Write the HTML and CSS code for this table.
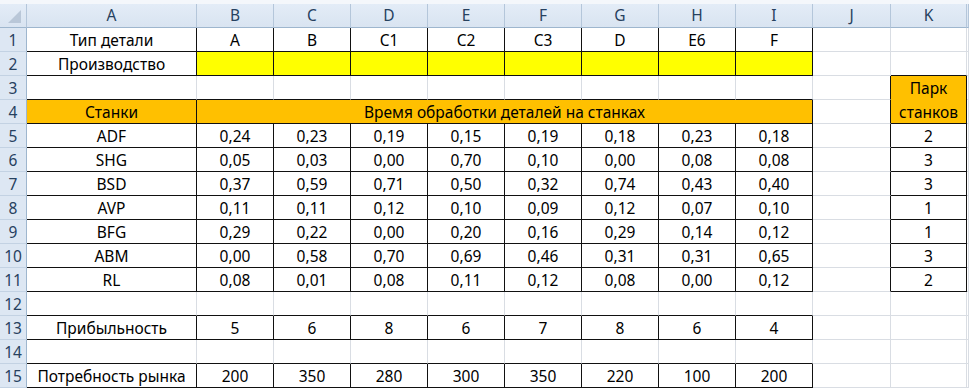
FILE: index.html
```html
<!DOCTYPE html>
<html lang="ru">
<head>
<meta charset="utf-8">
<title>Станки</title>
<link rel="stylesheet" href="styles.css">
</head>
<body>
<div class="sheet">
  <div class="strip"></div>

  <div class="ch corner"><svg class="tri" width="14" height="14" viewBox="0 0 14 14"><polygon points="13,0 13,13 0,13" fill="#b9c7d8"/></svg></div>
  <div class="ch">A</div><div class="ch">B</div><div class="ch">C</div><div class="ch">D</div><div class="ch">E</div><div class="ch">F</div><div class="ch">G</div><div class="ch">H</div><div class="ch">I</div><div class="ch">J</div><div class="ch">K</div><div class="ch"></div>

  <div class="rh">1</div>
  <div class="c b">Тип детали</div><div class="c b">A</div><div class="c b">B</div><div class="c b">C1</div><div class="c b">C2</div><div class="c b">C3</div><div class="c b">D</div><div class="c b">E6</div><div class="c b">F</div><div class="c"></div><div class="c"></div><div class="c"></div>

  <div class="rh">2</div>
  <div class="c b">Производство</div><div class="c b y"></div><div class="c b y"></div><div class="c b y"></div><div class="c b y"></div><div class="c b y"></div><div class="c b y"></div><div class="c b y"></div><div class="c b y"></div><div class="c"></div><div class="c bb"></div><div class="c"></div>

  <div class="rh">3</div>
  <div class="c bb"></div><div class="c bb"></div><div class="c bb"></div><div class="c bb"></div><div class="c bb"></div><div class="c bb"></div><div class="c bb"></div><div class="c bb"></div><div class="c bb"></div><div class="c br"></div><div class="c b o tall">Парк<br>станков</div><div class="c"></div>

  <div class="rh">4</div>
  <div class="c b o">Станки</div><div class="c b o wide">Время обработки деталей на станках</div><div class="c br"></div><div class="c"></div>

  <div class="rh">5</div>
  <div class="c b">ADF</div><div class="c b">0,24</div><div class="c b">0,23</div><div class="c b">0,19</div><div class="c b">0,15</div><div class="c b">0,19</div><div class="c b">0,18</div><div class="c b">0,23</div><div class="c b">0,18</div><div class="c br"></div><div class="c b">2</div><div class="c"></div>

  <div class="rh">6</div>
  <div class="c b">SHG</div><div class="c b">0,05</div><div class="c b">0,03</div><div class="c b">0,00</div><div class="c b">0,70</div><div class="c b">0,10</div><div class="c b">0,00</div><div class="c b">0,08</div><div class="c b">0,08</div><div class="c br"></div><div class="c b">3</div><div class="c"></div>

  <div class="rh">7</div>
  <div class="c b">BSD</div><div class="c b">0,37</div><div class="c b">0,59</div><div class="c b">0,71</div><div class="c b">0,50</div><div class="c b">0,32</div><div class="c b">0,74</div><div class="c b">0,43</div><div class="c b">0,40</div><div class="c br"></div><div class="c b">3</div><div class="c"></div>

  <div class="rh">8</div>
  <div class="c b">AVP</div><div class="c b">0,11</div><div class="c b">0,11</div><div class="c b">0,12</div><div class="c b">0,10</div><div class="c b">0,09</div><div class="c b">0,12</div><div class="c b">0,07</div><div class="c b">0,10</div><div class="c br"></div><div class="c b">1</div><div class="c"></div>

  <div class="rh">9</div>
  <div class="c b">BFG</div><div class="c b">0,29</div><div class="c b">0,22</div><div class="c b">0,00</div><div class="c b">0,20</div><div class="c b">0,16</div><div class="c b">0,29</div><div class="c b">0,14</div><div class="c b">0,12</div><div class="c br"></div><div class="c b">1</div><div class="c"></div>

  <div class="rh">10</div>
  <div class="c b">ABM</div><div class="c b">0,00</div><div class="c b">0,58</div><div class="c b">0,70</div><div class="c b">0,69</div><div class="c b">0,46</div><div class="c b">0,31</div><div class="c b">0,31</div><div class="c b">0,65</div><div class="c br"></div><div class="c b">3</div><div class="c"></div>

  <div class="rh">11</div>
  <div class="c b">RL</div><div class="c b">0,08</div><div class="c b">0,01</div><div class="c b">0,08</div><div class="c b">0,11</div><div class="c b">0,12</div><div class="c b">0,08</div><div class="c b">0,00</div><div class="c b">0,12</div><div class="c br"></div><div class="c b">2</div><div class="c"></div>

  <div class="rh">12</div>
  <div class="c bb"></div><div class="c bb"></div><div class="c bb"></div><div class="c bb"></div><div class="c bb"></div><div class="c bb"></div><div class="c bb"></div><div class="c bb"></div><div class="c bb"></div><div class="c"></div><div class="c"></div><div class="c"></div>

  <div class="rh">13</div>
  <div class="c b">Прибыльность</div><div class="c b">5</div><div class="c b">6</div><div class="c b">8</div><div class="c b">6</div><div class="c b">7</div><div class="c b">8</div><div class="c b">6</div><div class="c b">4</div><div class="c"></div><div class="c"></div><div class="c"></div>

  <div class="rh">14</div>
  <div class="c bb"></div><div class="c bb"></div><div class="c bb"></div><div class="c bb"></div><div class="c bb"></div><div class="c bb"></div><div class="c bb"></div><div class="c bb"></div><div class="c bb"></div><div class="c"></div><div class="c"></div><div class="c"></div>

  <div class="rh">15</div>
  <div class="c b">Потребность рынка</div><div class="c b">200</div><div class="c b">350</div><div class="c b">280</div><div class="c b">300</div><div class="c b">350</div><div class="c b">220</div><div class="c b">100</div><div class="c b">200</div><div class="c"></div><div class="c"></div><div class="c"></div>
</div>
</body>
</html>
```

FILE: styles.css
```css
html, body {
  margin: 0;
  padding: 0;
  background: #ffffff;
}

.sheet {
  width: 969px;
  height: 389px;
  overflow: hidden;
  display: grid;
  grid-template-columns: 27px 170px repeat(8, 77px) 78px 76px 1fr;
  grid-template-rows: 4px 24px repeat(15, 24px);
  font-family: "Noto Sans", "Open Sans", sans-serif;
  font-size: 15.5px;
  color: #000000;
}

.strip {
  grid-column: 1 / -1;
  background: #f4f7fb;
}

.ch {
  box-sizing: border-box;
  background: linear-gradient(#e3ecf7, #d9e4f1);
  border-right: 1px solid #b4c6da;
  border-bottom: 1px solid #9eb6ce;
  color: #27415f;
  display: flex;
  align-items: center;
  justify-content: center;
  line-height: 1;
  padding-top: 1px;
}

.corner {
  position: relative;
}

.tri {
  position: absolute;
  right: 4px;
  bottom: 3px;
}

.rh {
  box-sizing: border-box;
  background: #dde7f3;
  border-right: 1px solid #9eb6ce;
  border-bottom: 1px solid #c3d2e3;
  color: #27415f;
  display: flex;
  align-items: center;
  justify-content: center;
  line-height: 1;
  padding-top: 2px;
}

.c {
  box-sizing: border-box;
  border-right: 1px solid #d9dde3;
  border-bottom: 1px solid #d9dde3;
  display: flex;
  align-items: center;
  justify-content: center;
  text-align: center;
  line-height: 1;
  padding-top: 3px;
  white-space: nowrap;
}

.b {
  border-right-color: #111111;
  border-bottom-color: #111111;
}

.bb {
  border-bottom-color: #111111;
}

.br {
  border-right-color: #111111;
}

.y {
  background: #ffff00;
}

.o {
  background: #ffc000;
}

.wide {
  grid-column: span 8;
}

.tall {
  grid-row: span 2;
  line-height: 24px;
  padding-top: 1px;
}
```
